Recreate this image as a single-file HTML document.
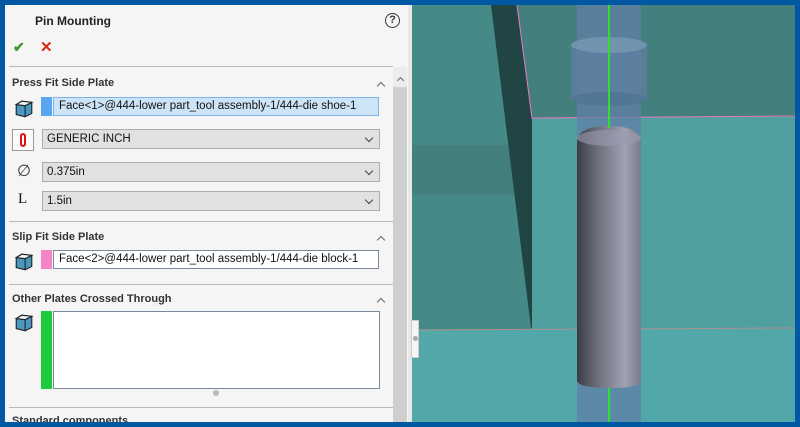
<!DOCTYPE html>
<html><head><style>
*{margin:0;padding:0;box-sizing:border-box}
body{width:800px;height:427px;overflow:hidden;background:#0058a3;font-family:"Liberation Sans",sans-serif;position:relative}
.a{position:absolute}
.panel{left:5px;top:5px;width:403px;height:417px;background:#f5f5f5;overflow:hidden}
.hdr{font-size:11px;font-weight:bold;color:#333}
.sep{height:1px;background:#b8b8b8;left:4px;width:384px}
.dd{background:#e1e1e1;border:1px solid #adadad;height:20px;font-size:11.5px;color:#111;padding:3px 0 0 4px}
.dd:after{content:"";position:absolute;right:7px;top:5px;width:5px;height:5px;border-right:1px solid #444;border-bottom:1px solid #444;transform:rotate(45deg)}
.inp{border:1px solid #7a8a99;background:#fff;height:19px;font-size:11.5px;color:#111;padding:2px 0 0 5px;white-space:nowrap}
.car{width:6px;height:6px;border-left:1.5px solid #666;border-top:1.5px solid #666;transform:rotate(45deg)}
</style></head><body>
<div class="a panel">
 <div class="a hdr" style="left:30px;top:9px;font-size:12px;color:#222">Pin Mounting</div>
 <div class="a" style="left:380px;top:8px;width:15px;height:15px;border:1.5px solid #333;border-radius:50%;font-size:11px;font-weight:bold;text-align:center;line-height:12px;color:#333">?</div>
 <div class="a" style="left:8px;top:34px;color:#3a9a2a;font-size:14px;font-weight:bold">✔</div>
 <div class="a" style="left:35px;top:33px;color:#d42a10;font-size:15px;font-weight:bold">✕</div>
 <div class="a sep" style="top:61px"></div>
 <div class="a" style="left:388px;top:62px;width:14px;height:360px;background:#cfcfcf"></div>
 <div class="a" style="left:388px;top:62px;width:14px;height:20px;background:#ececec"></div>
 <div class="a car" style="left:393px;top:73px;width:5px;height:5px"></div>
 <div class="a hdr" style="left:7px;top:72px">Press Fit Side Plate</div>
 <div class="a car" style="left:373px;top:78px"></div>
 <svg class="a" style="left:9px;top:94px" width="20" height="20" viewBox="0 0 18 18"><path d="M2 5 L7 2 L16 3 L16 13 L10 16 L2 14Z" fill="#4a98c0" stroke="#222"/><path d="M2 5 L10 6 L16 3 M10 6 L10 16" fill="none" stroke="#222"/><path d="M2 5 L7 2 L16 3 L10 6Z" fill="#e8f4fa" stroke="#222"/></svg>
 <div class="a" style="left:36px;top:92px;width:11px;height:19px;background:#5aa5f0"></div>
 <div class="a inp" style="left:48px;top:92px;width:326px;background:#cce4f7;border-color:#7eb4ea">Face&lt;1&gt;@444-lower part_tool assembly-1/444-die shoe-1</div>
 <div class="a" style="left:7px;top:124px;width:22px;height:22px;border:1px solid #999;background:#fafafa"><div class="a" style="left:7px;top:3px;width:6px;height:14px;border:2px solid #e01010;border-radius:3px"></div></div>
 <div class="a dd" style="left:37px;top:124px;width:338px">GENERIC INCH</div>
 <div class="a" style="left:12px;top:156px;font-size:16px;color:#333">∅</div>
 <div class="a dd" style="left:37px;top:157px;width:338px">0.375in</div>
 <div class="a" style="left:13px;top:186px;font-family:'Liberation Serif',serif;font-size:15px;color:#111">L</div>
 <div class="a dd" style="left:37px;top:186px;width:338px">1.5in</div>
 <div class="a sep" style="top:216px"></div>
 <div class="a hdr" style="left:7px;top:226px">Slip Fit Side Plate</div>
 <div class="a car" style="left:373px;top:232px"></div>
 <svg class="a" style="left:9px;top:247px" width="20" height="20" viewBox="0 0 18 18"><path d="M2 5 L7 2 L16 3 L16 13 L10 16 L2 14Z" fill="#4a98c0" stroke="#222"/><path d="M2 5 L10 6 L16 3 M10 6 L10 16" fill="none" stroke="#222"/><path d="M2 5 L7 2 L16 3 L10 6Z" fill="#e8f4fa" stroke="#222"/></svg>
 <div class="a" style="left:36px;top:245px;width:11px;height:19px;background:#f484c4"></div>
 <div class="a inp" style="left:48px;top:245px;width:326px">Face&lt;2&gt;@444-lower part_tool assembly-1/444-die block-1</div>
 <div class="a sep" style="top:279px"></div>
 <div class="a hdr" style="left:7px;top:288px">Other Plates Crossed Through</div>
 <div class="a car" style="left:373px;top:294px"></div>
 <svg class="a" style="left:9px;top:308px" width="20" height="20" viewBox="0 0 18 18"><path d="M2 5 L7 2 L16 3 L16 13 L10 16 L2 14Z" fill="#4a98c0" stroke="#222"/><path d="M2 5 L10 6 L16 3 M10 6 L10 16" fill="none" stroke="#222"/><path d="M2 5 L7 2 L16 3 L10 6Z" fill="#e8f4fa" stroke="#222"/></svg>
 <div class="a" style="left:36px;top:306px;width:11px;height:78px;background:#1ecb3c"></div>
 <div class="a" style="left:48px;top:306px;width:327px;height:78px;border:1px solid #7a8a99;background:#fff"></div>
 <div class="a" style="left:208px;top:385px;width:6px;height:6px;border-radius:50%;background:#bbb"></div>
 <div class="a sep" style="top:402px"></div>
 <div class="a hdr" style="left:7px;top:410px">Standard components</div>
</div>
<div class="a" style="left:408px;top:5px;width:4px;height:417px;background:#e8e8e8"></div>
<svg class="a" style="left:412px;top:5px" width="383" height="417" viewBox="412 5 383 417">
 <rect x="412" y="5" width="383" height="417" fill="#52a8a8"/>
 <rect x="412" y="5" width="120" height="325" fill="#468a87"/>
 <rect x="412" y="145" width="120" height="50" fill="#427f7d"/>
 <polygon points="517,5 795,5 795,117 532,118" fill="#427f7d"/>
 <rect x="532" y="118" width="263" height="211" fill="#50a0a0"/>
 <polygon points="491,5 517,5 532,118 532,328 531,328" fill="#214545"/>
 <polyline points="517,5 532,118 795,116" fill="none" stroke="#e87ac0" stroke-width="1"/>
 <line x1="412" y1="330" x2="795" y2="328" stroke="#b09090" stroke-width="1"/>
 <rect x="577" y="5" width="64" height="417" fill="#627fa8" opacity="0.75"/>
 <rect x="571" y="45" width="76" height="55" fill="#5f80a2" opacity="0.75"/>
 <ellipse cx="609" cy="45" rx="38" ry="8" fill="#7496b0" opacity="0.9"/>
 <ellipse cx="609" cy="99" rx="38" ry="7" fill="#4f7090" opacity="0.6"/>
 <defs><linearGradient id="g" x1="0" x2="1"><stop offset="0" stop-color="#3a3c44"/><stop offset="0.3" stop-color="#6a6c78"/><stop offset="0.75" stop-color="#a0a2b4"/><stop offset="1" stop-color="#7a7c88"/></linearGradient></defs>
 <path d="M577 143 Q577 126 609 126 Q641 126 641 143 L641 380 Q641 388 609 388 Q577 388 577 380Z" fill="url(#g)"/>
 <ellipse cx="609" cy="138" rx="32" ry="8" fill="#9a9cb0" opacity="0.6"/>
 <line x1="609" y1="5" x2="609" y2="128" stroke="#30e030" stroke-width="2"/>
 <line x1="609" y1="388" x2="609" y2="422" stroke="#30e030" stroke-width="2"/>
</svg>
<div class="a" style="left:411px;top:320px;width:8px;height:38px;background:#f5f5f5;border:1px solid #ccc"><div class="a" style="left:1px;top:15px;width:5px;height:5px;border-radius:50%;background:#aaa"></div></div>
</body></html>
